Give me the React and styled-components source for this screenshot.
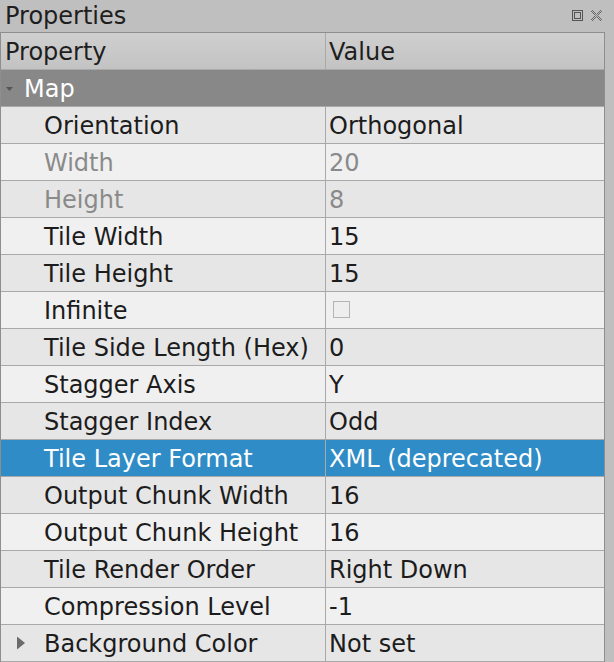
import React from "react";
import styled, { createGlobalStyle } from "styled-components";

const GlobalStyle = createGlobalStyle`
  html, body {
    margin: 0;
    padding: 0;
    background: #bfbfbf;
  }
  body {
    font-family: "DejaVu Sans", "Liberation Sans", sans-serif;
  }
`;

const Panel = styled.div`
  width: 614px;
  height: 662px;
  overflow: hidden;
  background: #bfbfbf;
  display: flex;
  flex-direction: column;
`;

const TitleBar = styled.div`
  height: 32px;
  display: flex;
  align-items: center;
  padding: 0 12px 0 5px;
  box-sizing: border-box;
`;

const Title = styled.div`
  flex: 1;
  font-size: 24px;
  color: #1e1e1e;
  line-height: 32px;
  margin-top: -1px;
`;

const TitleButtons = styled.div`
  display: flex;
  gap: 8px;
  align-items: center;
  margin-top: -2px;
`;

const Table = styled.div`
  width: 605px;
  border: 1px solid #8e8e8e;
  border-bottom: none;
  box-sizing: border-box;
  display: grid;
  grid-template-columns: 325px 1fr;
`;

const Cell = styled.div`
  height: 37px;
  box-sizing: border-box;
  border-bottom: 1px solid #a9a9a9;
  border-right: ${(p) => (p.$first ? "1px solid #a9a9a9" : "none")};
  display: flex;
  align-items: center;
  padding-left: ${(p) => p.$indent}px;
  padding-top: 2px;
  font-size: 24px;
  white-space: nowrap;
  position: relative;
  background: ${(p) => p.$bg};
  color: ${(p) => p.$color};
`;

const HeaderCell = styled(Cell)`
  background: linear-gradient(#cfcfcf, #c3c3c3);
  color: #1e1e1e;
`;

const GroupRow = styled.div`
  grid-column: 1 / span 2;
  height: 37px;
  box-sizing: border-box;
  border-bottom: 1px solid #a9a9a9;
  background: #888888;
  color: #ffffff;
  font-size: 24px;
  display: flex;
  align-items: center;
  padding: 2px 0 0 5px;
  gap: 11px;
`;

const Arrow = styled.span`
  position: absolute;
  left: ${(p) => p.$left}px;
  top: 50%;
  transform: translateY(-50%);
  display: flex;
`;

const Check = styled.span`
  width: 17px;
  height: 17px;
  box-sizing: border-box;
  border: 1px solid #b4b4b4;
  background: #eeeeee;
  margin-left: 4px;
  margin-top: -3px;
`;

const rows = [
  { name: "Orientation", value: "Orthogonal" },
  { name: "Width", value: "20", disabled: true },
  { name: "Height", value: "8", disabled: true },
  { name: "Tile Width", value: "15" },
  { name: "Tile Height", value: "15" },
  { name: "Infinite", check: true },
  { name: "Tile Side Length (Hex)", value: "0" },
  { name: "Stagger Axis", value: "Y" },
  { name: "Stagger Index", value: "Odd" },
  { name: "Tile Layer Format", value: "XML (deprecated)", selected: true },
  { name: "Output Chunk Width", value: "16" },
  { name: "Output Chunk Height", value: "16" },
  { name: "Tile Render Order", value: "Right Down" },
  { name: "Compression Level", value: "-1" },
  { name: "Background Color", value: "Not set", expandable: true },
];

const FloatIcon = () => (
  <svg width="11" height="11" viewBox="0 0 11 11">
    <rect x="0.5" y="0.5" width="10" height="10" fill="none" stroke="#555" />
    <rect x="2.5" y="2.5" width="6" height="6" fill="none" stroke="#555" />
  </svg>
);

const CloseIcon = () => (
  <svg width="11" height="11" viewBox="0 0 11 11">
    <path d="M1 0 L5.5 4.5 L10 0 M0 1 L4.5 5.5 L0 10 M1 11 L5.5 6.5 L10 11 M11 1 L6.5 5.5 L11 10" fill="none" stroke="#666" />
  </svg>
);

const renderRow = (row, i) => {
  const bg = row.selected ? "#308cc6" : i % 2 === 0 ? "#e6e6e6" : "#f0f0f0";
  const color = row.selected ? "#ffffff" : row.disabled ? "#8a8a8a" : "#1c1c1c";
  return (
    <React.Fragment key={row.name}>
      <Cell $first $indent={43} $bg={bg} $color={color}>
        {row.expandable && (
          <Arrow $left={16}>
            <svg width="8" height="13" viewBox="0 0 8 13">
              <path d="M0 0 L8 6.5 L0 13 Z" fill="#6b6b6b" />
            </svg>
          </Arrow>
        )}
        {row.name}
      </Cell>
      <Cell $indent={3} $bg={bg} $color={color}>
        {row.check ? <Check /> : row.value}
      </Cell>
    </React.Fragment>
  );
};

export default function App() {
  return (
    <>
      <GlobalStyle />
      <Panel>
        <TitleBar>
          <Title>Properties</Title>
          <TitleButtons>
            <FloatIcon />
            <CloseIcon />
          </TitleButtons>
        </TitleBar>
        <Table>
          <HeaderCell $first $indent={4}>Property</HeaderCell>
          <HeaderCell $indent={3}>Value</HeaderCell>
          <GroupRow>
            <svg width="7" height="4" viewBox="0 0 7 4">
              <path d="M0 0 L7 0 L3.5 4 Z" fill="#555" />
            </svg>
            Map
          </GroupRow>
          {rows.map(renderRow)}
        </Table>
      </Panel>
    </>
  );
}
